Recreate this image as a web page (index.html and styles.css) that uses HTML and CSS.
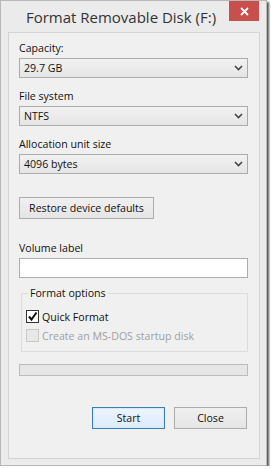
FILE: index.html
```html
<!DOCTYPE html>
<html>
<head>
<meta charset="utf-8">
<link rel="stylesheet" href="styles.css">
</head>
<body>
<div class="window">
  <div class="titlebar">
    <div class="title">Format Removable Disk (F:)</div>
    <div class="close"><svg width="9" height="9" viewBox="0 0 9 9"><path d="M1 1 L8 8 M8 1 L1 8" stroke="#fff" stroke-width="1.8"/></svg></div>
  </div>
  <div class="client">
    <div class="label first">Capacity:</div>
    <div class="combo"><span>29.7 GB</span><svg class="arrow" width="9" height="6" viewBox="0 0 9 6"><path d="M1 1 L4.5 4.5 L8 1" fill="none" stroke="#444" stroke-width="1.6"/></svg></div>
    <div class="label">File system</div>
    <div class="combo"><span>NTFS</span><svg class="arrow" width="9" height="6" viewBox="0 0 9 6"><path d="M1 1 L4.5 4.5 L8 1" fill="none" stroke="#444" stroke-width="1.6"/></svg></div>
    <div class="label">Allocation unit size</div>
    <div class="combo"><span>4096 bytes</span><svg class="arrow" width="9" height="6" viewBox="0 0 9 6"><path d="M1 1 L4.5 4.5 L8 1" fill="none" stroke="#444" stroke-width="1.6"/></svg></div>
    <div class="btn restore">Restore device defaults</div>
    <div class="label vol">Volume label</div>
    <div class="input"></div>
    <div class="group">
      <div class="legend">Format options</div>
      <div class="check"><span class="box on"><svg width="11" height="11" viewBox="0 0 11 11"><path d="M2 5.5 L4.5 8.5 L9.5 1.5" fill="none" stroke="#111" stroke-width="2"/></svg></span><span>Quick Format</span></div>
      <div class="check disabled"><span class="box"></span><span>Create an MS-DOS startup disk</span></div>
    </div>
    <div class="progress"></div>
    <div class="actions">
      <div class="btn act default">Start</div>
      <div class="btn act">Close</div>
    </div>
  </div>
</div>
</body>
</html>
```
FILE: styles.css
```css
html, body { margin: 0; padding: 0; background: #fff; }
body { font-family: "Open Sans", "Noto Sans", sans-serif; font-size: 10.6px; color: #111; }
.window {
  width: 267px; height: 466px; box-sizing: border-box;
  background: #ebebeb; border: 1px solid #b8b8b8;
  box-shadow: 2px 2px 2px #555;
  display: flex; flex-direction: column;
}
.titlebar { height: 31px; display: flex; align-items: flex-start; }
.title { flex: 1; text-align: center; font-size: 15px; color: #333; padding-top: 6px; padding-left: 12px; }
.close { width: 30px; height: 20px; background: #c7504c; margin-right: 7px; display: flex; align-items: center; justify-content: center; }
.client {
  flex: 1; margin: 0 6px 6px 7px; background: #f0f0f0; border: 1px solid #d4d4d4;
  padding: 0 11px 0 10px; display: flex; flex-direction: column;
}
.label { height: 15px; line-height: 15px; margin-top: 11px; margin-bottom: 2px; }
.label.first { margin-top: 8px; }
.combo {
  height: 20px; box-sizing: border-box; border: 1px solid #acacac;
  background: linear-gradient(#f2f2f2, #e5e5e5);
  display: flex; align-items: center; justify-content: space-between; padding: 0 4px 0 4px;
}
.btn {
  box-sizing: border-box; border: 1px solid #acacac; background: linear-gradient(#f0f0f0, #e5e5e5);
  display: flex; align-items: center; justify-content: center;
}
.restore { width: 135px; height: 22px; margin-top: 23px; }
.label.vol { margin-top: 22px; }
.input { height: 20px; box-sizing: border-box; border: 1px solid #abadb3; background: #fff; }
.group {
  margin-top: 15px; margin-left: 2px; height: 59px; box-sizing: border-box;
  border: 1px solid #dcdcdc; position: relative; padding: 13px 0 0 4px;
}
.legend { position: absolute; top: -9px; left: 6px; background: #f0f0f0; padding: 0 2px; line-height: 16px; }
.check { display: flex; align-items: center; height: 19px; gap: 3px; }
.box { width: 13px; height: 13px; box-sizing: border-box; border: 1px solid #333; background: #fff; display: flex; align-items: center; justify-content: center; }
.check.disabled { color: #a0a0a0; }
.check.disabled .box { border-color: #c8c8c8; background: #e8e8e8; }
.progress { margin-top: 12px; height: 12px; box-sizing: border-box; border: 1px solid #bcbcbc; background: #e6e6e6; }
.actions { display: flex; justify-content: flex-end; gap: 9px; margin-top: 31px; padding-right: 1px; }
.act { width: 73px; height: 22px; }
.act.default { border-color: #3c7fb1; box-shadow: inset 0 0 0 1px #d6e9f8; background: linear-gradient(#ecf4fc, #dcecfc); }
```
